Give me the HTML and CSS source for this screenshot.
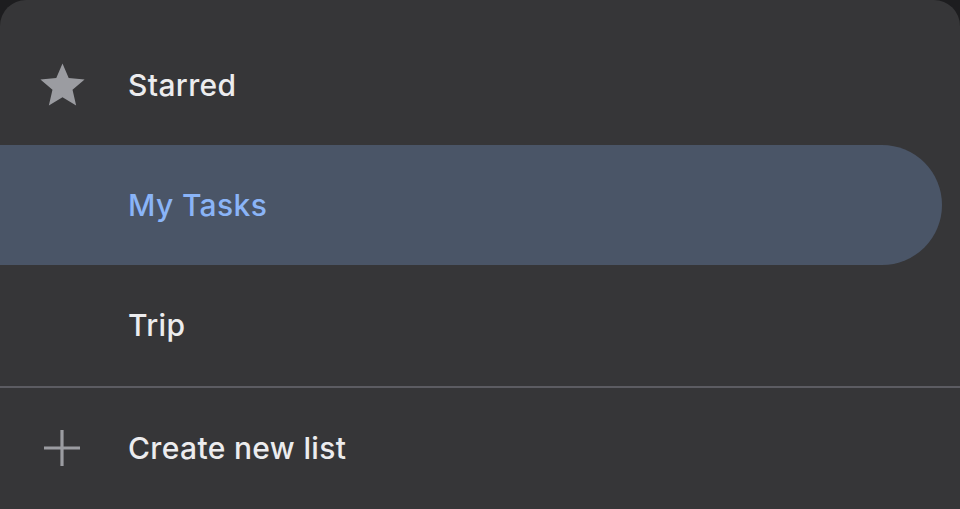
FILE: index.html
```html
<!DOCTYPE html>
<html>
<head>
<meta charset="utf-8">
<link rel="stylesheet" href="styles.css">
</head>
<body>
<div class="sheet">
  <ul class="lists">
    <li class="row">
      <span class="icon">
        <svg viewBox="0 0 24 24" width="53" height="53"><path fill="#9b9ca1" d="M12 17.27L18.18 21l-1.64-7.03L22 9.24l-7.19-.61L12 2 9.19 8.63 2 9.24l5.46 4.73L5.82 21z"/></svg>
      </span>
      <span class="label">Starred</span>
    </li>
    <li class="row selected">
      <span class="icon"></span>
      <span class="label">My Tasks</span>
    </li>
    <li class="row">
      <span class="icon"></span>
      <span class="label">Trip</span>
    </li>
  </ul>
  <div class="divider"></div>
  <div class="row create">
    <span class="icon">
      <svg viewBox="0 0 36 36" width="36" height="36"><path d="M18 0v36M0 18h36" stroke="#9b9ca1" stroke-width="3.2" fill="none"/></svg>
    </span>
    <span class="label">Create new list</span>
  </div>
</div>
</body>
</html>
```

FILE: styles.css
```css
html, body {
  margin: 0;
  padding: 0;
  background: #1d1d1f;
  width: 960px;
  height: 509px;
  overflow: hidden;
}
.sheet {
  background: #363638;
  height: 509px;
  border-radius: 26px 26px 0 0;
  padding-top: 25px;
  box-sizing: border-box;
  font-family: Inter, "Noto Sans", sans-serif;
}
.lists {
  list-style: none;
  margin: 0;
  padding: 0;
}
.row {
  display: flex;
  align-items: center;
  height: 120px;
  color: #ececee;
  font-size: 30px;
  font-weight: 500;
  letter-spacing: 0.35px;
}
.icon {
  width: 124px;
  height: 53px;
  display: flex;
  align-items: center;
  justify-content: center;
  flex: none;
}
.row .label {
  padding-left: 4px;
}
.selected {
  background: #4a5567;
  color: #8ab4f7;
  margin-right: 18px;
  border-radius: 0 60px 60px 0;
}
.divider {
  height: 2px;
  background: #5c5c62;
  margin-top: 1px;
}
.create {
  height: 120px;
}
```
